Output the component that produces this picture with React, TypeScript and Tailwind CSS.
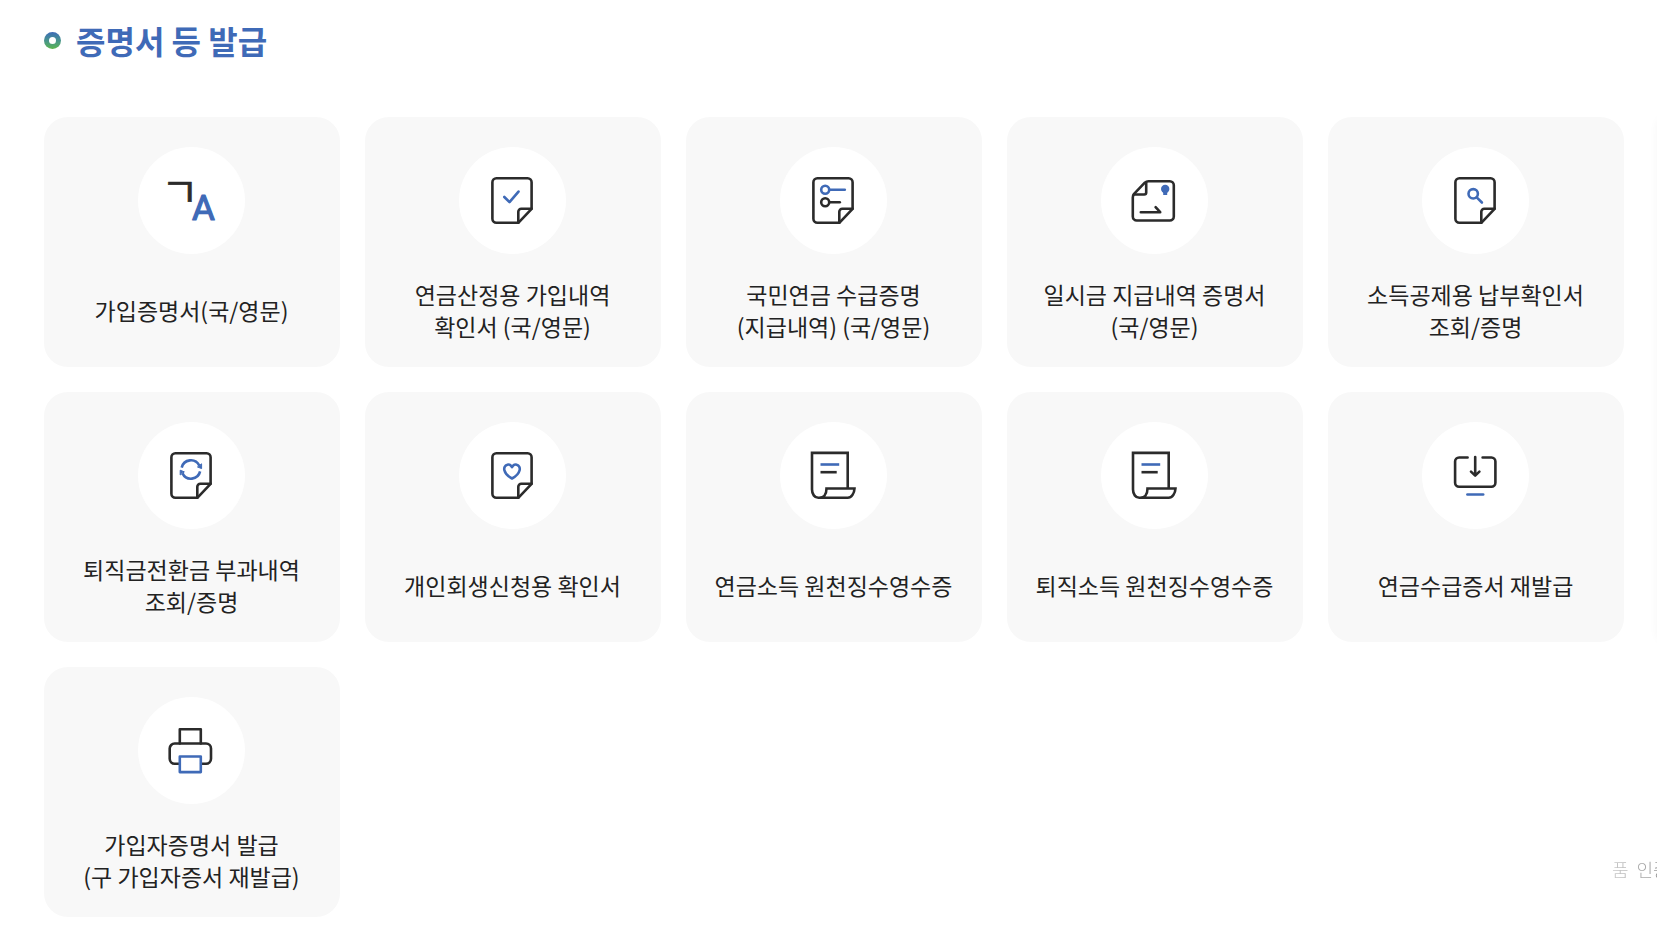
import type { ReactNode } from 'react'

const INK = '#2b2b2b'
const BLUE = '#3f6ab7'

function Icon({ children }: { children: ReactNode }) {
    return (
        <svg viewBox="0 0 56 56" className="w-14 h-14 mr-px overflow-visible" fill="none" stroke={INK} strokeWidth="2.6" strokeLinecap="round" strokeLinejoin="round" aria-hidden="true">
            {children}
        </svg>
    )
}

// sheet with the folded bottom right corner, shared by several icons
function Sheet({ children }: { children: ReactNode }) {
    return (
        <Icon>
            <path d="M34.3 49.8H12.4a4 4 0 0 1-4-4V9.2a4 4 0 0 1 4-4h31.2a4 4 0 0 1 4 4v26.6z" />
            <path d="M47.6 35.8H37.3a3 3 0 0 0-3 3v11" />
            {children}
        </Icon>
    )
}

const languageIcon = (
    <Icon>
        <text x="-2" y="34" fontSize="41" fontWeight="400" fill={INK} stroke={INK} strokeWidth="0.6" className="font-['Noto_Sans_CJK_KR',sans-serif]">ㄱ</text>
        <text x="40.500" y="47" fontSize="35" fontWeight="400" textAnchor="middle" fill={BLUE} stroke={BLUE} strokeWidth="1.2" className="font-['Roboto',sans-serif]">A</text>
    </Icon>
)

const checkIcon = (
    <Sheet>
        <path d="M20.3 24l5.2 5.2 9-10.6" stroke={BLUE} />
    </Sheet>
)

const listIcon = (
    <Sheet>
        <circle cx="20.2" cy="16.8" r="4" stroke={BLUE} />
        <path d="M24.4 16.8h15.4" stroke={BLUE} />
        <circle cx="20.2" cy="29.2" r="4" />
        <path d="M24.4 29.2h10.4" />
    </Sheet>
)

const certificateIcon = (
    <Icon>
        <path d="M22.5 8.2h21.3a4 4 0 0 1 4 4v31.3a4 4 0 0 1-4 4h-33a4 4 0 0 1-4-4V24.5c0-1.6.6-2.8 1.5-3.8L18.8 9.6c1-.9 2.2-1.4 3.7-1.4z" />
        <path d="M20.2 9.5v10a2 2 0 0 1-2 2H7.8" />
        <path d="M14.8 39.2h19.4l-4.6-5" />
        <circle cx="39.2" cy="16" r="4.2" fill={BLUE} stroke="none" />
        <path d="M37.2 18h4v4h-4z" fill={BLUE} stroke="none" />
    </Icon>
)

const searchIcon = (
    <Sheet>
        <circle cx="26.2" cy="20.8" r="4.7" stroke={BLUE} />
        <path d="M29.7 24.3l5.2 5.2" stroke={BLUE} />
    </Sheet>
)

const refreshIcon = (
    <Sheet>
        <path d="M18.7 19.6a9.4 9.4 0 0 1 17.6-2M37.1 23.4a9.4 9.4 0 0 1-17.6 2" stroke={BLUE} strokeLinecap="butt" />
        <path d="M38.6 16.2v4.4l-3.8-1.5zM17.2 26.6v-4.4l3.8 1.5z" fill={BLUE} stroke={BLUE} strokeWidth="1" />
    </Sheet>
)

const heartIcon = (
    <Sheet>
        <path d="M28 19.2c-1.3-2.4-3.2-3-4.7-2.5-2.4.6-3.5 3-2.9 5.6.8 3.4 4 6.3 7.6 8.2 3.6-1.9 6.8-4.8 7.6-8.2.6-2.6-.5-5-2.9-5.6-1.5-.5-3.4.1-4.7 2.5z" stroke={BLUE} />
    </Sheet>
)

const receiptIcon = (
    <Icon>
        <path d="M42.7 40V4.9H7v36.6c0 4.6 2.6 8.3 6.3 8.3h29.4c3.6 0 6.6-4.2 6.8-9.3h-28c0 5.2-2.6 9.3-7.4 9.3" strokeLinejoin="miter" />
        <path d="M15.5 16.5h18.7" stroke={BLUE} strokeLinecap="butt" />
        <path d="M15.5 24.2h16.2" strokeLinecap="butt" />
    </Icon>
)

const downloadIcon = (
    <Icon>
        <path d="M20.6 9.5h-8.5a4 4 0 0 0-4 4v21.3a4 4 0 0 0 4 4h32.3a4 4 0 0 0 4-4V13.5a4 4 0 0 0-4-4h-8.8" />
        <path d="M28.2 9v18.3M24 23.6l4.2 4 4.2-4" />
        <path d="M20.4 46.5h15.8" stroke={BLUE} />
    </Icon>
)

const printerIcon = (
    <Icon>
        <path d="M16.8 20.5V6.3h21v14.2" />
        <path d="M16.5 40.8h-4.8a5 5 0 0 1-5-5V25.5a5 5 0 0 1 5-5H43a5 5 0 0 1 5 5v10.3a5 5 0 0 1-5 5h-4.8" />
        <path d="M16.8 33.5h21v15.6h-21z" stroke={BLUE} />
    </Icon>
)

const services = [
    { icon: languageIcon, lines: ['가입증명서(국/영문)'] },
    { icon: checkIcon, lines: ['연금산정용 가입내역', '확인서 (국/영문)'] },
    { icon: listIcon, lines: ['국민연금 수급증명', '(지급내역) (국/영문)'] },
    { icon: certificateIcon, lines: ['일시금 지급내역 증명서', '(국/영문)'] },
    { icon: searchIcon, lines: ['소득공제용 납부확인서', '조회/증명'] },
    { icon: refreshIcon, lines: ['퇴직금전환금 부과내역', '조회/증명'] },
    { icon: heartIcon, lines: ['개인회생신청용 확인서'] },
    { icon: receiptIcon, lines: ['연금소득 원천징수영수증'] },
    { icon: receiptIcon, lines: ['퇴직소득 원천징수영수증'] },
    { icon: downloadIcon, lines: ['연금수급증서 재발급'] },
    { icon: printerIcon, lines: ['가입자증명서 발급', '(구 가입자증서 재발급)'] },
]

export default function App() {
    return (
        <main className="relative overflow-hidden bg-white pt-[18px] pb-2 pl-11 pr-[33px] font-['Noto_Sans_CJK_KR',sans-serif] text-[#222222]">
            <header className="flex items-center gap-[15px]">
                <span className="w-[17px] h-[17px] rounded-full bg-linear-to-b from-[#3f6ab7] to-[#5cb548] flex items-center justify-center">
                    <span className="w-[7px] h-[7px] rounded-full bg-white" />
                </span>
                <h2 className="text-[32px] leading-[45px] font-bold text-[#3f6ab7]">증명서 등 발급</h2>
            </header>

            <ul className="mt-[54px] grid grid-cols-5 gap-[25px]">
                {services.map((service) => (
                    <li key={service.lines[0]}>
                        <a href="#" className="flex flex-col items-center rounded-3xl bg-[#f8f8f8] pt-[30px] pb-[25px] pr-px hover:bg-gray-100">
                            <span className="w-[107px] h-[107px] rounded-full bg-white flex items-center justify-center">
                                {service.icon}
                            </span>
                            <span className="mt-6 h-16 flex flex-col justify-center text-center text-[23px] leading-8 whitespace-nowrap">
                                {service.lines.map((line) => (
                                    <span key={line}>{line}</span>
                                ))}
                            </span>
                        </a>
                    </li>
                ))}
            </ul>

            {/* next slide and its caption, peeking in from the right */}
            <div className="absolute -right-5 top-[117px] w-5 h-[525px] rounded-3xl shadow-[0_0_10px_rgba(0,0,0,0.04)]" />
            <p className="absolute left-full bottom-10 -ml-[45px] flex gap-2 text-lg leading-8 font-light whitespace-nowrap bg-linear-to-r from-[#c8c8c8] to-[#8a8a8a] bg-clip-text text-transparent">
                <span>품</span>
                <span>인증</span>
            </p>
        </main>
    )
}
